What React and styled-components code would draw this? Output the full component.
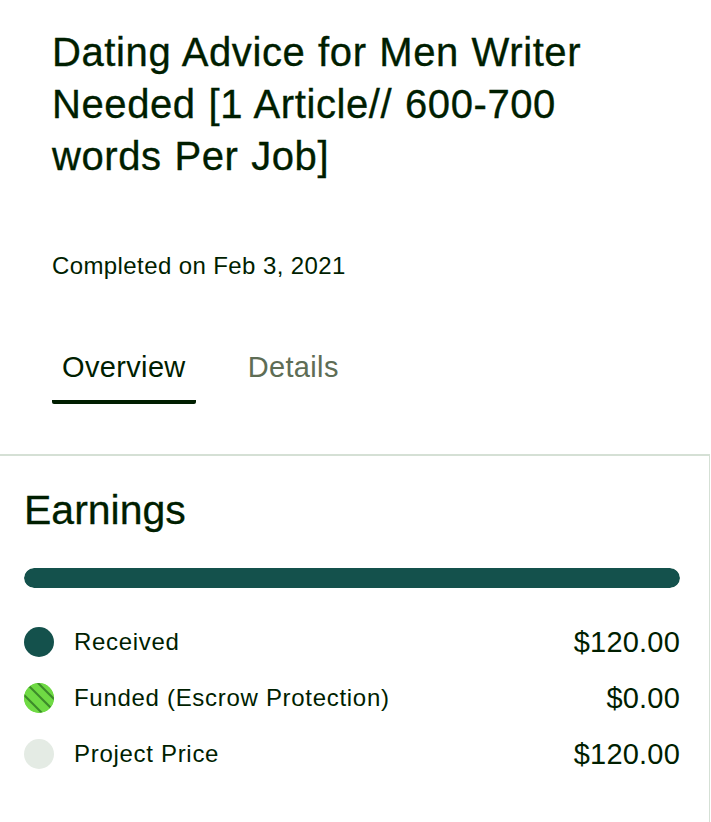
import React from "react";
import styled, { createGlobalStyle } from "styled-components";

const GlobalStyle = createGlobalStyle`
  html, body {
    margin: 0;
    padding: 0;
    background: #ffffff;
  }
  body {
    font-family: "Liberation Sans", Arial, sans-serif;
    color: #001e00;
    overflow: hidden;
  }
`;

const Page = styled.div`
  display: flex;
  flex-direction: column;
  width: 711px;
  min-height: 822px;
`;

const Header = styled.header`
  display: flex;
  flex-direction: column;
  padding: 26px 52px 0 52px;
`;

const Title = styled.h1`
  margin: 0;
  font-size: 40px;
  line-height: 52px;
  font-weight: 400;
  letter-spacing: 0.6px;
  word-spacing: 1px;
  -webkit-text-stroke: 0.35px #001e00;
  color: #001e00;
`;

const Meta = styled.p`
  margin: 68px 0 0 0;
  font-size: 24px;
  line-height: 32px;
  letter-spacing: 0.4px;
  color: #001e00;
`;

const Tabs = styled.nav`
  display: flex;
  gap: 42px;
  margin-top: 67px;
`;

const Tab = styled.div`
  display: flex;
  justify-content: center;
  padding: 0 10px 15px 10px;
  font-size: 29px;
  line-height: 36px;
  letter-spacing: 0.35px;
  color: ${(p) => (p.$active ? "#001e00" : "#5e6d55")};
  border-bottom: 4px solid ${(p) => (p.$active ? "#001e00" : "transparent")};
  border-radius: 0 0 2px 2px;
  cursor: pointer;
`;

const Card = styled.section`
  display: flex;
  flex-direction: column;
  margin-top: 50px;
  margin-right: 1px;
  padding: 30px 29px 60px 24px;
  border-top: 2px solid #d5e0d5;
  border-right: 1px solid #d5e0d5;
`;

const CardTitle = styled.h2`
  margin: 0;
  font-size: 41px;
  line-height: 48px;
  font-weight: 400;
  -webkit-text-stroke: 0.3px #001e00;
  color: #001e00;
`;

const Bar = styled.div`
  height: 20px;
  margin-top: 34px;
  border-radius: 10px;
  background: #e4ebe4;
  overflow: hidden;
  display: flex;
`;

const BarFill = styled.div`
  height: 100%;
  background: #14514c;
  border-radius: 10px;
`;

const Legend = styled.ul`
  list-style: none;
  margin: 39px 0 0 0;
  padding: 0;
  display: flex;
  flex-direction: column;
  gap: 26px;
`;

const Row = styled.li`
  display: flex;
  align-items: center;
  height: 30px;
`;

const Dot = styled.span`
  flex: none;
  width: 30px;
  height: 30px;
  border-radius: 50%;
  background: ${(p) => p.$color};
  overflow: hidden;
  display: flex;
`;

const Label = styled.span`
  margin-left: 20px;
  flex: 1;
  font-size: 24px;
  letter-spacing: 0.7px;
  color: #001e00;
`;

const Amount = styled.span`
  font-size: 29px;
  letter-spacing: 0.2px;
  color: #001e00;
`;

const StripedDot = () => (
  <Dot $color="#6fda44">
    <svg width="30" height="30" viewBox="0 0 30 30">
      <defs>
        <clipPath id="escrow-clip">
          <circle cx="15" cy="15" r="15" />
        </clipPath>
      </defs>
      <g clipPath="url(#escrow-clip)">
        <rect width="30" height="30" fill="#6fda44" />
        <g stroke="#3c8a2a" strokeWidth="2">
          <line x1="-4" y1="8" x2="18" y2="30" />
          <line x1="0" y1="-2" x2="32" y2="30" />
          <line x1="10" y1="-4" x2="34" y2="20" />
        </g>
      </g>
    </svg>
  </Dot>
);

const rows = [
  { label: "Received", amount: "$120.00", dot: <Dot $color="#14514c" /> },
  { label: "Funded (Escrow Protection)", amount: "$0.00", dot: <StripedDot /> },
  { label: "Project Price", amount: "$120.00", dot: <Dot $color="#e4ebe4" /> },
];

export default function App() {
  const received = 120;
  const price = 120;
  return (
    <>
      <GlobalStyle />
      <Page>
        <Header>
          <Title>Dating Advice for Men Writer Needed [1 Article// 600-700 words Per Job]</Title>
          <Meta>Completed on Feb 3, 2021</Meta>
          <Tabs>
            <Tab $active>Overview</Tab>
            <Tab>Details</Tab>
          </Tabs>
        </Header>
        <Card>
          <CardTitle>Earnings</CardTitle>
          <Bar>
            <BarFill style={{ width: `${(received / price) * 100}%` }} />
          </Bar>
          <Legend>
            {rows.map((r) => (
              <Row key={r.label}>
                {r.dot}
                <Label>{r.label}</Label>
                <Amount>{r.amount}</Amount>
              </Row>
            ))}
          </Legend>
        </Card>
      </Page>
    </>
  );
}
